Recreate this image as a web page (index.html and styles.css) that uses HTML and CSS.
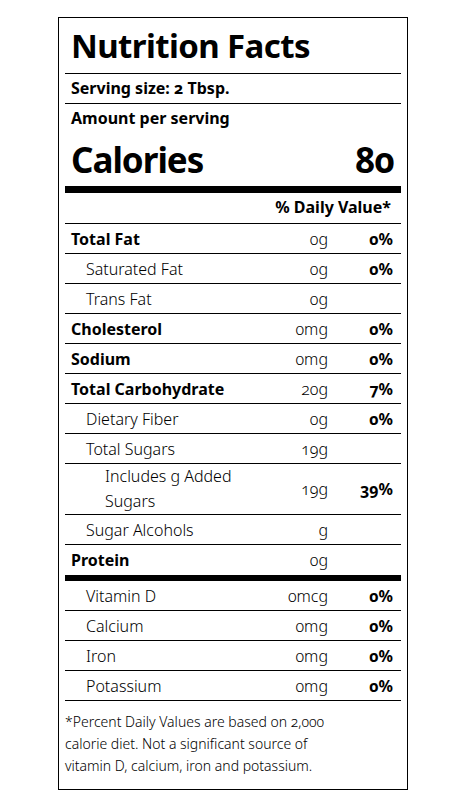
FILE: index.html
```html
<!DOCTYPE html>
<html lang="en">
<head>
    <meta charset="UTF-8">
    <meta name="viewport" content="width=device-width, initial-scale=1.0">
    <title>Nutrition Facts</title>
    <link rel="stylesheet" href="styles.css">
</head>
<body>

    <div class="label">
        <h1 class="title">Nutrition Facts</h1>

        <div class="serving">Serving size: 2 Tbsp.</div>
        <div class="amount-per">Amount per serving</div>
        <div class="calories">
            <span>Calories</span>
            <span>80</span>
        </div>

        <div class="dv-head">% Daily Value*</div>

        <!-- Основные нутриенты -->
        <div class="row main">
            <span class="name">Total Fat</span>
            <span class="qty">0g</span>
            <span class="dv">0%</span>
        </div>
        <div class="row sub">
            <span class="name">Saturated Fat</span>
            <span class="qty">0g</span>
            <span class="dv">0%</span>
        </div>
        <div class="row sub">
            <span class="name">Trans Fat</span>
            <span class="qty">0g</span>
            <span class="dv"></span>
        </div>
        <div class="row main">
            <span class="name">Cholesterol</span>
            <span class="qty">0mg</span>
            <span class="dv">0%</span>
        </div>
        <div class="row main">
            <span class="name">Sodium</span>
            <span class="qty">0mg</span>
            <span class="dv">0%</span>
        </div>
        <div class="row main">
            <span class="name">Total Carbohydrate</span>
            <span class="qty">20g</span>
            <span class="dv">7%</span>
        </div>
        <div class="row sub">
            <span class="name">Dietary Fiber</span>
            <span class="qty">0g</span>
            <span class="dv">0%</span>
        </div>
        <div class="row sub">
            <span class="name">Total Sugars</span>
            <span class="qty">19g</span>
            <span class="dv"></span>
        </div>
        <div class="row sub2 tall">
            <span class="name">Includes g Added<br>Sugars</span>
            <span class="qty">19g</span>
            <span class="dv">39%</span>
        </div>
        <div class="row sub">
            <span class="name">Sugar Alcohols</span>
            <span class="qty">g</span>
            <span class="dv"></span>
        </div>
        <div class="row main last">
            <span class="name">Protein</span>
            <span class="qty">0g</span>
            <span class="dv"></span>
        </div>

        <!-- Витамины и минералы -->
        <div class="row sub">
            <span class="name">Vitamin D</span>
            <span class="qty">0mcg</span>
            <span class="dv">0%</span>
        </div>
        <div class="row sub">
            <span class="name">Calcium</span>
            <span class="qty">0mg</span>
            <span class="dv">0%</span>
        </div>
        <div class="row sub">
            <span class="name">Iron</span>
            <span class="qty">0mg</span>
            <span class="dv">0%</span>
        </div>
        <div class="row sub">
            <span class="name">Potassium</span>
            <span class="qty">0mg</span>
            <span class="dv">0%</span>
        </div>

        <p class="footnote">*Percent Daily Values are based on 2,000<br>
            calorie diet. Not a significant source of<br>
            vitamin D, calcium, iron and potassium.</p>
    </div>

</body>
</html>
```

FILE: styles.css
```css
body {
    margin: 0;
    padding: 0;
    background-color: #ffffff;
    font-family: 'Noto Sans', 'Open Sans', sans-serif;
    font-variant-numeric: oldstyle-nums;
    color: #000;
}

.label {
    width: 350px;
    box-sizing: border-box;
    margin: 17px 0 0 58px;
    padding: 0 6px;
    border: 1px solid #000;
}

.title {
    margin: 0;
    height: 55px;
    line-height: 55px;
    padding-left: 6px;
    font-size: 33px;
    font-weight: 700;
    letter-spacing: -0.6px;
    border-bottom: 1px solid #000;
}

.serving,
.amount-per {
    height: 29px;
    line-height: 29px;
    padding-left: 6px;
    font-size: 16px;
    font-weight: 700;
}

.serving {
    border-bottom: 1px solid #000;
}

.amount-per {
    height: 30px;
}

.calories {
    display: flex;
    justify-content: space-between;
    height: 52px;
    line-height: 52px;
    padding: 0 7px 0 6px;
    font-size: 35px;
    font-weight: 700;
    letter-spacing: -1px;
    border-bottom: 7px solid #000;
}

.dv-head {
    height: 30px;
    line-height: 29px;
    padding-right: 10px;
    text-align: right;
    font-size: 16px;
    font-weight: 700;
    border-bottom: 1px solid #000;
}

.row {
    display: flex;
    align-items: center;
    height: 29px;
    padding: 0 8px 0 6px;
    font-size: 16px;
    border-bottom: 1px solid #000;
}

.row .name {
    flex: 1;
}

.row .qty {
    width: 80px;
    text-align: right;
    font-weight: 300;
}

.row .dv {
    width: 65px;
    text-align: right;
    font-weight: 700;
}

.row.main .name {
    font-weight: 700;
}

.row.sub .name,
.row.sub2 .name {
    font-weight: 300;
}

.row.sub .name {
    padding-left: 15px;
}

.row.sub2 .name {
    padding-left: 34px;
}

.row.tall {
    height: 50px;
    line-height: 25px;
}

.row.last {
    height: 30px;
    border-bottom: 6px solid #000;
}

.footnote {
    margin: 0;
    padding: 10px 0 12px;
    font-size: 14px;
    line-height: 22px;
    font-weight: 300;
}
```
